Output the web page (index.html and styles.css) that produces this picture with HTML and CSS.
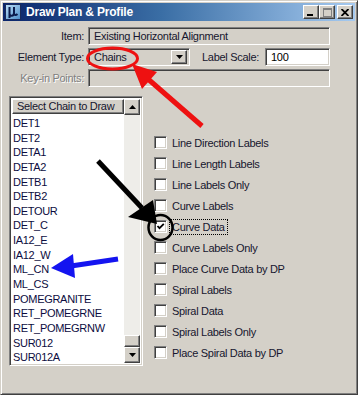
FILE: index.html
```html
<!DOCTYPE html>
<html lang="en">

<head>
    <meta charset="UTF-8">
    <title>Draw Plan &amp; Profile</title>
    <link rel="stylesheet" href="styles.css">
</head>

<body>
    <div class="window">
        <!-- Title bar -->
        <div class="titlebar">
            <svg class="app-icon" width="16" height="16" viewBox="0 0 16 16">
                <defs>
                    <linearGradient id="ig" x1="0" y1="0" x2="1" y2="1">
                        <stop offset="0" stop-color="#bfe0f8" />
                        <stop offset="1" stop-color="#4a8cc8" />
                    </linearGradient>
                </defs>
                <rect x="0.5" y="0.5" width="15" height="15" fill="url(#ig)" stroke="#1a2a5a" />
                <path d="M4.5 3 V14 M4.5 9.5 C4.5 12.5 9 12.5 9 9 V3 M9 9 C9 11.5 11 11.5 12.5 10" fill="none"
                    stroke="#0c1c4c" stroke-width="2" />
            </svg>
            <span class="title">Draw Plan &amp; Profile</span>
            <div class="title-buttons">
                <div class="tbtn">
                    <svg width="8" height="7" viewBox="0 0 8 7"><rect x="0" y="5" width="6" height="2" fill="#000" /></svg>
                </div>
                <div class="tbtn">
                    <svg width="9" height="9" viewBox="0 0 9 9"><rect x="0.5" y="0.5" width="8" height="8" fill="none" stroke="#808080" /><rect x="0" y="0" width="9" height="2" fill="#808080" /></svg>
                </div>
                <div class="tbtn close-btn">
                    <svg width="8" height="7" viewBox="0 0 8 7"><path d="M0.5 0 L7.5 7 M7.5 0 L0.5 7" stroke="#000" stroke-width="1.8" /></svg>
                </div>
            </div>
        </div>

        <!-- Top form -->
        <div class="form">
            <label class="form-label">Item:</label>
            <div class="field sunken readonly">Existing Horizontal Alignment</div>

            <label class="form-label">Element Type:</label>
            <div class="field-row">
                <div class="dropdown sunken">
                    <span class="dropdown-text">Chains</span>
                    <div class="dropdown-btn raised">
                        <svg width="7" height="4" viewBox="0 0 7 4"><path d="M0 0 H7 L3.5 4 Z" fill="#000" /></svg>
                    </div>
                </div>
                <div class="scale">
                    <label class="form-label">Label Scale:</label>
                    <div class="field sunken input">100</div>
                </div>
            </div>

            <label class="form-label disabled">Key-in Points:</label>
            <div class="field sunken readonly"></div>
        </div>

        <!-- Lower section -->
        <div class="lower">
            <div class="listbox sunken">
                <div class="list-main">
                    <div class="list-head raised">Select Chain to Draw</div>
                    <ul class="list-items">
                        <li>DET1</li>
                        <li>DET2</li>
                        <li>DETA1</li>
                        <li>DETA2</li>
                        <li>DETB1</li>
                        <li>DETB2</li>
                        <li>DETOUR</li>
                        <li>DET_C</li>
                        <li>IA12_E</li>
                        <li>IA12_W</li>
                        <li>ML_CN</li>
                        <li>ML_CS</li>
                        <li>POMEGRANITE</li>
                        <li>RET_POMEGRNE</li>
                        <li>RET_POMEGRNW</li>
                        <li>SUR012</li>
                        <li>SUR012A</li>
                    </ul>
                </div>
                <div class="scrollbar">
                    <div class="sb-btn raised">
                        <svg width="7" height="4" viewBox="0 0 7 4"><path d="M0 4 H7 L3.5 0 Z" fill="#000" /></svg>
                    </div>
                    <div class="sb-track"></div>
                    <div class="sb-thumb raised"></div>
                    <div class="sb-btn raised">
                        <svg width="7" height="4" viewBox="0 0 7 4"><path d="M0 0 H7 L3.5 4 Z" fill="#000" /></svg>
                    </div>
                </div>
            </div>

            <div class="options">
                <div class="option"><span class="checkbox"></span><span>Line Direction Labels</span></div>
                <div class="option"><span class="checkbox"></span><span>Line Length Labels</span></div>
                <div class="option"><span class="checkbox"></span><span>Line Labels Only</span></div>
                <div class="option"><span class="checkbox"></span><span>Curve Labels</span></div>
                <div class="option">
                    <span class="checkbox">
                        <svg width="9" height="9" viewBox="0 0 9 9"><path d="M1.5 4 L3.5 6.2 L7.8 1.8" fill="none" stroke="#000" stroke-width="1.8" /></svg>
                    </span>
                    <span class="focused">Curve Data</span>
                </div>
                <div class="option"><span class="checkbox"></span><span>Curve Labels Only</span></div>
                <div class="option"><span class="checkbox"></span><span>Place Curve Data by DP</span></div>
                <div class="option"><span class="checkbox"></span><span>Spiral Labels</span></div>
                <div class="option"><span class="checkbox"></span><span>Spiral Data</span></div>
                <div class="option"><span class="checkbox"></span><span>Spiral Labels Only</span></div>
                <div class="option"><span class="checkbox"></span><span>Place Spiral Data by DP</span></div>
            </div>
        </div>

        <!-- Annotation marks drawn over the dialog -->
        <svg class="marks" width="358" height="395" viewBox="0 0 358 395">
            <ellipse cx="111.5" cy="57.5" rx="25" ry="10.5" fill="none" stroke="#ee1111" stroke-width="3" />
            <line x1="201" y1="125" x2="147" y2="78" stroke="#ee1111" stroke-width="5" />
            <polygon points="131,63 141,88 156,71" fill="#ee1111" />

            <line x1="97" y1="160" x2="141" y2="207" stroke="#000" stroke-width="5" />
            <polygon points="127,216 152,199 156,223" fill="#000" />
            <ellipse cx="159.5" cy="226.5" rx="12" ry="12.5" fill="none" stroke="#000" stroke-width="2.5" />

            <line x1="117" y1="258" x2="70" y2="265" stroke="#1414f0" stroke-width="5" />
            <polygon points="50,267 72,253 74,277" fill="#1414f0" />
        </svg>
    </div>
</body>

</html>
```

FILE: styles.css
```css
body {
    margin: 0;
    font-family: 'Liberation Sans', Arial, sans-serif;
    font-size: 11px;
    letter-spacing: -0.3px;
    color: #16162e;
    background-color: #d4d0c8;
}

.window {
    position: relative;
    width: 358px;
    height: 395px;
    box-sizing: border-box;
    background-color: #d4d0c8;
    border: 1px solid;
    border-color: #d4d0c8 #404040 #404040 #d4d0c8;
    box-shadow: inset 1px 1px #fff, inset -1px -1px #808080;
    padding: 2px;
}

/* Win classic bevels */
.raised {
    box-sizing: border-box;
    background-color: #d4d0c8;
    border: 1px solid;
    border-color: #fff #404040 #404040 #fff;
    box-shadow: inset -1px -1px #808080;
}

.sunken {
    box-sizing: border-box;
    border: 1px solid;
    border-color: #808080 #fff #fff #808080;
    box-shadow: inset 1px 1px #404040, inset -1px -1px #d4d0c8;
}

/* Title bar */
.titlebar {
    height: 18px;
    display: flex;
    align-items: center;
    padding: 0 2px;
    background: linear-gradient(to right, #0a246a, #3a6ea5 45%, #a6caf0);
}

.app-icon {
    margin-right: 5px;
}

.title {
    color: #fff;
    font-weight: bold;
    font-size: 12px;
    letter-spacing: -0.2px;
}

.title-buttons {
    margin-left: auto;
    display: flex;
}

.tbtn {
    width: 16px;
    height: 14px;
    display: flex;
    align-items: center;
    justify-content: center;
    box-sizing: border-box;
    background-color: #d4d0c8;
    border: 1px solid;
    border-color: #fff #404040 #404040 #fff;
    box-shadow: inset -1px -1px #808080;
}

.close-btn {
    margin-left: 2px;
}

/* Top form */
.form {
    display: grid;
    grid-template-columns: 81px 242px;
    column-gap: 4px;
    row-gap: 3px;
    margin-top: 6px;
}

.form-label {
    text-align: right;
    line-height: 18px;
    white-space: nowrap;
}

.form-label.disabled {
    color: #808080;
    text-shadow: 1px 1px #fff;
}

.field {
    height: 18px;
    line-height: 16px;
    padding-left: 5px;
    white-space: nowrap;
    overflow: hidden;
}

.readonly {
    background-color: #d4d0c8;
}

.input {
    width: 65px;
    background-color: #fff;
    color: #000;
}

.field-row {
    display: flex;
    justify-content: space-between;
}

.dropdown {
    width: 102px;
    height: 18px;
    display: flex;
    align-items: center;
    padding: 2px 2px 2px 5px;
    background-color: #d4d0c8;
}

.dropdown-text {
    flex: 1;
}

.dropdown-btn {
    width: 16px;
    height: 14px;
    display: flex;
    align-items: center;
    justify-content: center;
}

.scale {
    display: flex;
    gap: 6px;
}

/* Lower section */
.lower {
    display: flex;
    margin-top: 9px;
    margin-left: 6px;
}

.listbox {
    width: 134px;
    height: 270px;
    display: flex;
    padding: 2px;
    background-color: #fff;
}

.list-main {
    flex: 1;
    overflow: hidden;
}

.list-head {
    height: 15px;
    line-height: 13px;
    padding-left: 4px;
    white-space: nowrap;
    overflow: hidden;
}

.list-items {
    list-style: none;
    margin: 2px 0 0;
    padding: 0 0 0 1px;
    color: #0c0c40;
}

.list-items li {
    height: 14.65px;
    line-height: 14.65px;
    white-space: nowrap;
}

.scrollbar {
    width: 16px;
    display: flex;
    flex-direction: column;
}

.sb-btn {
    height: 16px;
    display: flex;
    align-items: center;
    justify-content: center;
}

.sb-track {
    flex: 1;
    background-color: #eeede9;
}

.sb-thumb {
    height: 12px;
}

.options {
    display: flex;
    flex-direction: column;
    margin-left: 11px;
    margin-top: 36px;
}

.option {
    height: 21px;
    display: flex;
    align-items: center;
    gap: 5px;
}

.checkbox {
    width: 13px;
    height: 13px;
    box-sizing: border-box;
    display: flex;
    align-items: center;
    justify-content: center;
    background-color: #fff;
    border: 1px solid;
    border-color: #808080 #fff #fff #808080;
    box-shadow: inset 1px 1px #404040, inset -1px -1px #d4d0c8;
}

.focused {
    outline: 1px dotted #000;
    padding: 1px 2px;
    margin-left: -2px;
}

.marks {
    position: absolute;
    top: 0;
    left: 0;
    pointer-events: none;
}
```
